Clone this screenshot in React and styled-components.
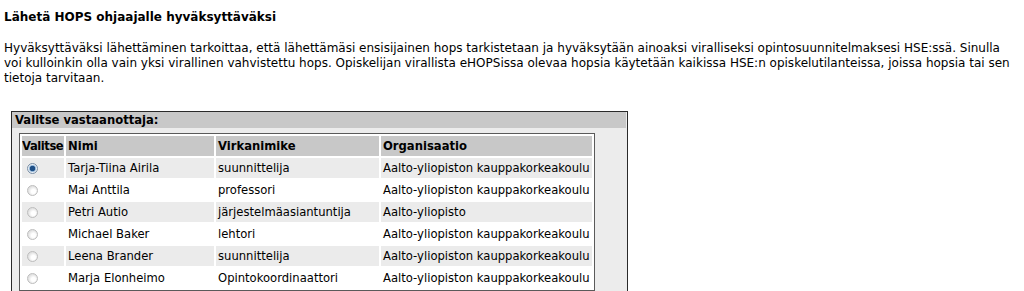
import styled, { createGlobalStyle } from 'styled-components';

const GlobalStyle = createGlobalStyle`
  * {
    box-sizing: border-box;
  }

  html, body {
    margin: 0;
    padding: 0;
    background: #ffffff;
  }

  body {
    font-family: "DejaVu Sans", Verdana, sans-serif;
    font-size: 12px;
    color: #000000;
  }
`;

const Page = styled.div`
  padding: 10px 4px 0 4px;
`;

const Title = styled.h1`
  margin: 0;
  font-size: 12px;
  font-weight: bold;
  line-height: 15px;
`;

const Intro = styled.p`
  margin: 16px 0 0 0;
  line-height: 15px;
  width: 1016px;
`;

const Box = styled.div`
  margin: 25px 0 0 7px;
  width: 617px;
  border: 1px solid #2a2a2a;
  background: #ececec;
  padding-bottom: 10px;
  font-size: 11.6px;
`;

const BoxHeader = styled.div`
  height: 16px;
  line-height: 16px;
  margin-right: 1px;
  padding-left: 3px;
  background: #c8c8c8;
  font-weight: bold;
`;

const Table = styled.table`
  margin: 5px 0 0 7px;
  width: 576px;
  table-layout: fixed;
  border-collapse: separate;
  border-spacing: 2px;
  border: 1px solid #5a5a5a;
  background: #ffffff;
  font-size: 11.6px;
`;

const HeadCell = styled.th`
  height: 20px;
  padding: 0 0 0 ${({ $pad }) => $pad ?? 2}px;
  background: #c8c8c8;
  text-align: left;
  font-weight: bold;
  white-space: nowrap;
  overflow: hidden;
  letter-spacing: ${({ $tight }) => ($tight ? '-0.45px' : 'normal')};
`;

const Cell = styled.td`
  height: 20px;
  padding: 0 0 0 ${({ $pad }) => $pad ?? 2}px;
  background: ${({ $odd }) => ($odd ? '#ebebeb' : '#ffffff')};
  white-space: nowrap;
  overflow: hidden;
`;

const Radio = styled.span`
  display: inline-block;
  vertical-align: middle;
  width: 11px;
  height: 11px;
  border-radius: 50%;
  border: 1px solid ${({ $checked }) => ($checked ? '#7a8fa6' : '#bdbdbd')};
  background: ${({ $checked }) =>
    $checked
      ? 'radial-gradient(circle, #1f4f86 0 2.5px, #8fb4d8 3px, #e8eef4 4px)'
      : 'radial-gradient(circle at 60% 60%, #ffffff 0 2px, #e2e2e2 5px)'};
`;

const people = [
  ['Tarja-Tiina Airila', 'suunnittelija', 'Aalto-yliopiston kauppakorkeakoulu'],
  ['Mai Anttila', 'professori', 'Aalto-yliopiston kauppakorkeakoulu'],
  ['Petri Autio', 'järjestelmäasiantuntija', 'Aalto-yliopisto'],
  ['Michael Baker', 'lehtori', 'Aalto-yliopiston kauppakorkeakoulu'],
  ['Leena Brander', 'suunnittelija', 'Aalto-yliopiston kauppakorkeakoulu'],
  ['Marja Elonheimo', 'Opintokoordinaattori', 'Aalto-yliopiston kauppakorkeakoulu'],
];

export default function App() {
  return (
    <>
      <GlobalStyle />
      <Page>
        <Title>Lähetä HOPS ohjaajalle hyväksyttäväksi</Title>
        <Intro>
          Hyväksyttäväksi lähettäminen tarkoittaa, että lähettämäsi ensisijainen hops tarkistetaan ja
          hyväksytään ainoaksi viralliseksi opintosuunnitelmaksesi HSE:ssä. Sinulla voi kulloinkin olla
          vain yksi virallinen vahvistettu hops. Opiskelijan virallista eHOPSissa olevaa hopsia käytetään
          kaikissa HSE:n opiskelutilanteissa, joissa hopsia tai sen tietoja tarvitaan.
        </Intro>

        <Box>
          <BoxHeader>Valitse vastaanottaja:</BoxHeader>
          <Table>
            <colgroup>
              <col style={{ width: 42 }} />
              <col style={{ width: 148 }} />
              <col style={{ width: 163 }} />
              <col style={{ width: 211 }} />
            </colgroup>
            <thead>
              <tr>
                <HeadCell $pad={0} $tight>Valitse</HeadCell>
                <HeadCell>Nimi</HeadCell>
                <HeadCell>Virkanimike</HeadCell>
                <HeadCell>Organisaatio</HeadCell>
              </tr>
            </thead>
            <tbody>
              {people.map(([name, title, org], i) => (
                <tr key={name}>
                  <Cell $odd={i % 2 === 0} $pad={5}>
                    <Radio $checked={i === 0} />
                  </Cell>
                  <Cell $odd={i % 2 === 0}>{name}</Cell>
                  <Cell $odd={i % 2 === 0}>{title}</Cell>
                  <Cell $odd={i % 2 === 0}>{org}</Cell>
                </tr>
              ))}
            </tbody>
          </Table>
        </Box>
      </Page>
    </>
  );
}
